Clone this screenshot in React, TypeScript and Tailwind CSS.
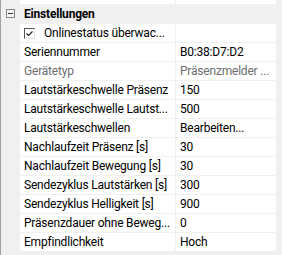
const rows: { name: string; value: string; muted?: boolean; check?: boolean }[] = [
  { name: 'Onlinestatus überwac...', value: '', check: true },
  { name: 'Seriennummer', value: 'B0:38:D7:D2' },
  { name: 'Gerätetyp', value: 'Präsenzmelder ...', muted: true },
  { name: 'Lautstärkeschwelle Präsenz', value: '150' },
  { name: 'Lautstärkeschwelle Lautst...', value: '500' },
  { name: 'Lautstärkeschwellen', value: 'Bearbeiten...' },
  { name: 'Nachlaufzeit Präsenz [s]', value: '30' },
  { name: 'Nachlaufzeit Bewegung [s]', value: '30' },
  { name: 'Sendezyklus Lautstärken [s]', value: '300' },
  { name: 'Sendezyklus Helligkeit [s]', value: '900' },
  { name: 'Präsenzdauer ohne Beweg...', value: '0' },
  { name: 'Empfindlichkeit', value: 'Hoch' },
];

export default function App() {
  return (
    <div
      className="w-[282px] h-[255px] overflow-hidden bg-[#f0f0f0] border-l border-[#a0a0a0] text-[12px] leading-none tracking-[-0.2px] text-black"
      style={{ fontFamily: 'Roboto, sans-serif' }}
    >
      {/* tail of the previous row */}
      <div className="flex h-[4px]">
        <div className="w-[19px]" />
        <div className="w-[155px] bg-white" />
        <div className="w-px" />
        <div className="w-[100px] bg-white" />
      </div>

      {/* category */}
      <div className="flex h-[19px] items-center">
        <div className="w-[19px] flex justify-center">
          <div className="w-[9px] h-[9px] border border-[#888] bg-[#f7f7f7] flex items-center justify-center">
            <div className="w-[5px] h-px bg-[#333]" />
          </div>
        </div>
        <span className="pl-[4px] font-bold">Einstellungen</span>
      </div>

      {rows.map((r) => (
        <div key={r.name} className="flex h-[18px] mt-px">
          <div className="w-[19px]" />
          <div
            className={`w-[155px] bg-white flex items-center pl-[4px] whitespace-nowrap overflow-hidden ${r.muted ? 'text-[#6d6d6d]' : ''}`}
          >
            {r.check && (
              <div className="w-[11px] h-[11px] mr-[9px] border-l border-t border-[#555] border-r border-b border-r-[#e3e3e3] border-b-[#e3e3e3] bg-white flex items-center justify-center">
                <svg width="9" height="9" viewBox="0 0 9 9">
                  <path d="M1.5 4.5 L3.5 6.5 L7.5 2.5" fill="none" stroke="#222" strokeWidth="1.2" />
                </svg>
              </div>
            )}
            {r.name}
          </div>
          <div className="w-px" />
          <div
            className={`w-[100px] bg-white flex items-center pl-[4px] whitespace-nowrap overflow-hidden ${r.muted ? 'text-[#6d6d6d]' : ''}`}
          >
            {r.value}
          </div>
        </div>
      ))}
    </div>
  );
}
